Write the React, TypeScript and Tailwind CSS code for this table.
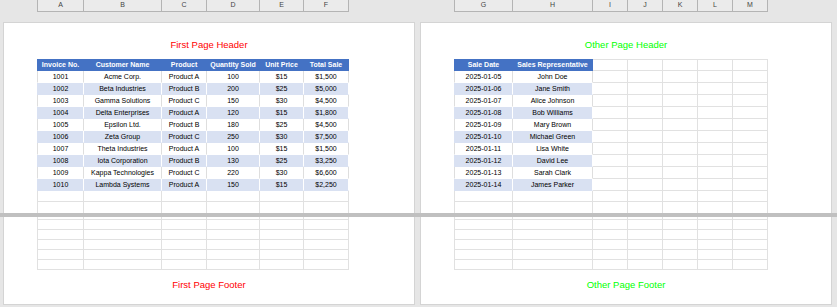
type Col = { w: string; letter: string };
type Kind = "head" | "stripe" | "plain" | "grid";

const leftCols: Col[] = [
  { w: "w-[47px]", letter: "A" },
  { w: "w-[78px]", letter: "B" },
  { w: "w-[45px]", letter: "C" },
  { w: "w-[53px]", letter: "D" },
  { w: "w-[44px]", letter: "E" },
  { w: "w-[45px]", letter: "F" },
];

const rightCols: Col[] = [
  { w: "w-[59px]", letter: "G" },
  { w: "w-[80px]", letter: "H" },
  { w: "w-[35px]", letter: "I" },
  { w: "w-[35px]", letter: "J" },
  { w: "w-[35px]", letter: "K" },
  { w: "w-[35px]", letter: "L" },
  { w: "w-[35px]", letter: "M" },
];

const salesHead = ["Invoice No.", "Customer Name", "Product", "Quantity Sold", "Unit Price", "Total Sale"];
const sales = [
  ["1001", "Acme Corp.", "Product A", "100", "$15", "$1,500"],
  ["1002", "Beta Industries", "Product B", "200", "$25", "$5,000"],
  ["1003", "Gamma Solutions", "Product C", "150", "$30", "$4,500"],
  ["1004", "Delta Enterprises", "Product A", "120", "$15", "$1,800"],
  ["1005", "Epsilon Ltd.", "Product B", "180", "$25", "$4,500"],
  ["1006", "Zeta Group", "Product C", "250", "$30", "$7,500"],
  ["1007", "Theta Industries", "Product A", "100", "$15", "$1,500"],
  ["1008", "Iota Corporation", "Product B", "130", "$25", "$3,250"],
  ["1009", "Kappa Technologies", "Product C", "220", "$30", "$6,600"],
  ["1010", "Lambda Systems", "Product A", "150", "$15", "$2,250"],
];

const repHead = ["Sale Date", "Sales Representative"];
const reps = [
  ["2025-01-05", "John Doe"],
  ["2025-01-06", "Jane Smith"],
  ["2025-01-07", "Alice Johnson"],
  ["2025-01-08", "Bob Williams"],
  ["2025-01-09", "Mary Brown"],
  ["2025-01-10", "Michael Green"],
  ["2025-01-11", "Lisa White"],
  ["2025-01-12", "David Lee"],
  ["2025-01-13", "Sarah Clark"],
  ["2025-01-14", "James Parker"],
];

const cellStyle: Record<Kind, string> = {
  head: "bg-[#4472c4] text-white font-bold border-r border-b border-[#4472c4]",
  stripe: "bg-[#d9e1f2] text-black border-r border-b border-r-white border-b-[#d9e1f2]",
  plain: "bg-white text-black border-r border-b border-r-[#dedede] border-b-white",
  grid: "bg-white border-r border-b border-[#e1e1e1]",
};

const firstStyle: Record<Kind, string> = {
  head: "border-l border-l-[#4472c4]",
  stripe: "border-l border-l-[#d9e1f2]",
  plain: "border-l border-l-[#dedede]",
  grid: "border-l border-l-[#e1e1e1]",
};

function GridRow({
  cols,
  cells = [],
  kind,
  h,
  topLine = false,
}: {
  cols: Col[];
  cells?: string[];
  kind: Kind;
  h: string;
  topLine?: boolean;
}) {
  return (
    <div className={`flex ${h}`}>
      {cols.map((c, i) => {
        const k: Kind = i < cells.length ? kind : "grid";
        return (
          <div
            key={c.letter}
            className={`${c.w} shrink-0 flex items-center justify-center whitespace-nowrap text-[7px] leading-none ${cellStyle[k]} ${
              i === 0 ? firstStyle[k] : ""
            } ${topLine && k === "grid" ? "border-t border-t-[#e1e1e1]" : ""}`}
          >
            {cells[i] ?? ""}
          </div>
        );
      })}
    </div>
  );
}

function ColumnLetters({ cols }: { cols: Col[] }) {
  return (
    <div className="flex h-full">
      {cols.map((c, i) => (
        <div
          key={c.letter}
          className={`${c.w} shrink-0 flex items-center justify-center bg-[#ebebeb] border-r border-b border-[#b4b4b4] text-[7px] text-[#444] ${
            i === 0 ? "border-l" : ""
          }`}
        >
          {c.letter}
        </div>
      ))}
    </div>
  );
}

function TopPage({
  title,
  color,
  cols,
  head,
  rows,
}: {
  title: string;
  color: string;
  cols: Col[];
  head: string[];
  rows: string[][];
}) {
  return (
    <div className="w-[412px] h-[191px] shrink-0 overflow-hidden bg-white border border-b-0 border-[#d4d4d4]">
      <p className={`pt-[17px] text-center text-[9.5px] leading-[10px] ${color}`}>{title}</p>
      <div className="mt-[9px] pl-[33px]">
        <GridRow cols={cols} cells={head} kind="head" h="h-[12px]" topLine />
        {rows.map((r, i) => (
          <GridRow key={r[0]} cols={cols} cells={r} kind={i % 2 === 0 ? "plain" : "stripe"} h="h-[12px]" />
        ))}
        <GridRow cols={cols} kind="grid" h="h-[11px]" />
        <GridRow cols={cols} kind="grid" h="h-[12px]" />
      </div>
    </div>
  );
}

function BottomPage({ title, color, cols }: { title: string; color: string; cols: Col[] }) {
  return (
    <div className="w-[412px] h-[88px] shrink-0 overflow-hidden bg-white border border-t-0 border-[#d4d4d4]">
      <div className="pl-[33px]">
        <GridRow cols={cols} kind="grid" h="h-[3px]" />
        {[0, 1, 2, 3, 4].map((i) => (
          <GridRow key={i} cols={cols} kind="grid" h="h-[10px]" />
        ))}
      </div>
      <p className={`mt-[10px] text-center text-[9.5px] leading-[10px] ${color}`}>{title}</p>
    </div>
  );
}

export default function App() {
  return (
    <div className="w-[837px] h-[307px] overflow-hidden bg-[#e6e6e6] font-['Liberation_Sans',Arial,sans-serif]">
      <div className="flex h-[12px]">
        <div className="w-[37px] shrink-0" />
        <ColumnLetters cols={leftCols} />
        <div className="w-[105px] shrink-0" />
        <ColumnLetters cols={rightCols} />
      </div>

      <div className="flex gap-[5px] pl-[3px] mt-[10px]">
        <TopPage title="First Page Header" color="text-[#ff0000]" cols={leftCols} head={salesHead} rows={sales} />
        <TopPage title="Other Page Header" color="text-[#00ff00]" cols={rightCols} head={repHead} rows={reps} />
      </div>

      <div className="h-[4px] bg-[#c0c0c0]" />

      <div className="flex gap-[5px] pl-[3px]">
        <BottomPage title="First Page Footer" color="text-[#ff0000]" cols={leftCols} />
        <BottomPage title="Other Page Footer" color="text-[#00ff00]" cols={rightCols} />
      </div>
    </div>
  );
}
